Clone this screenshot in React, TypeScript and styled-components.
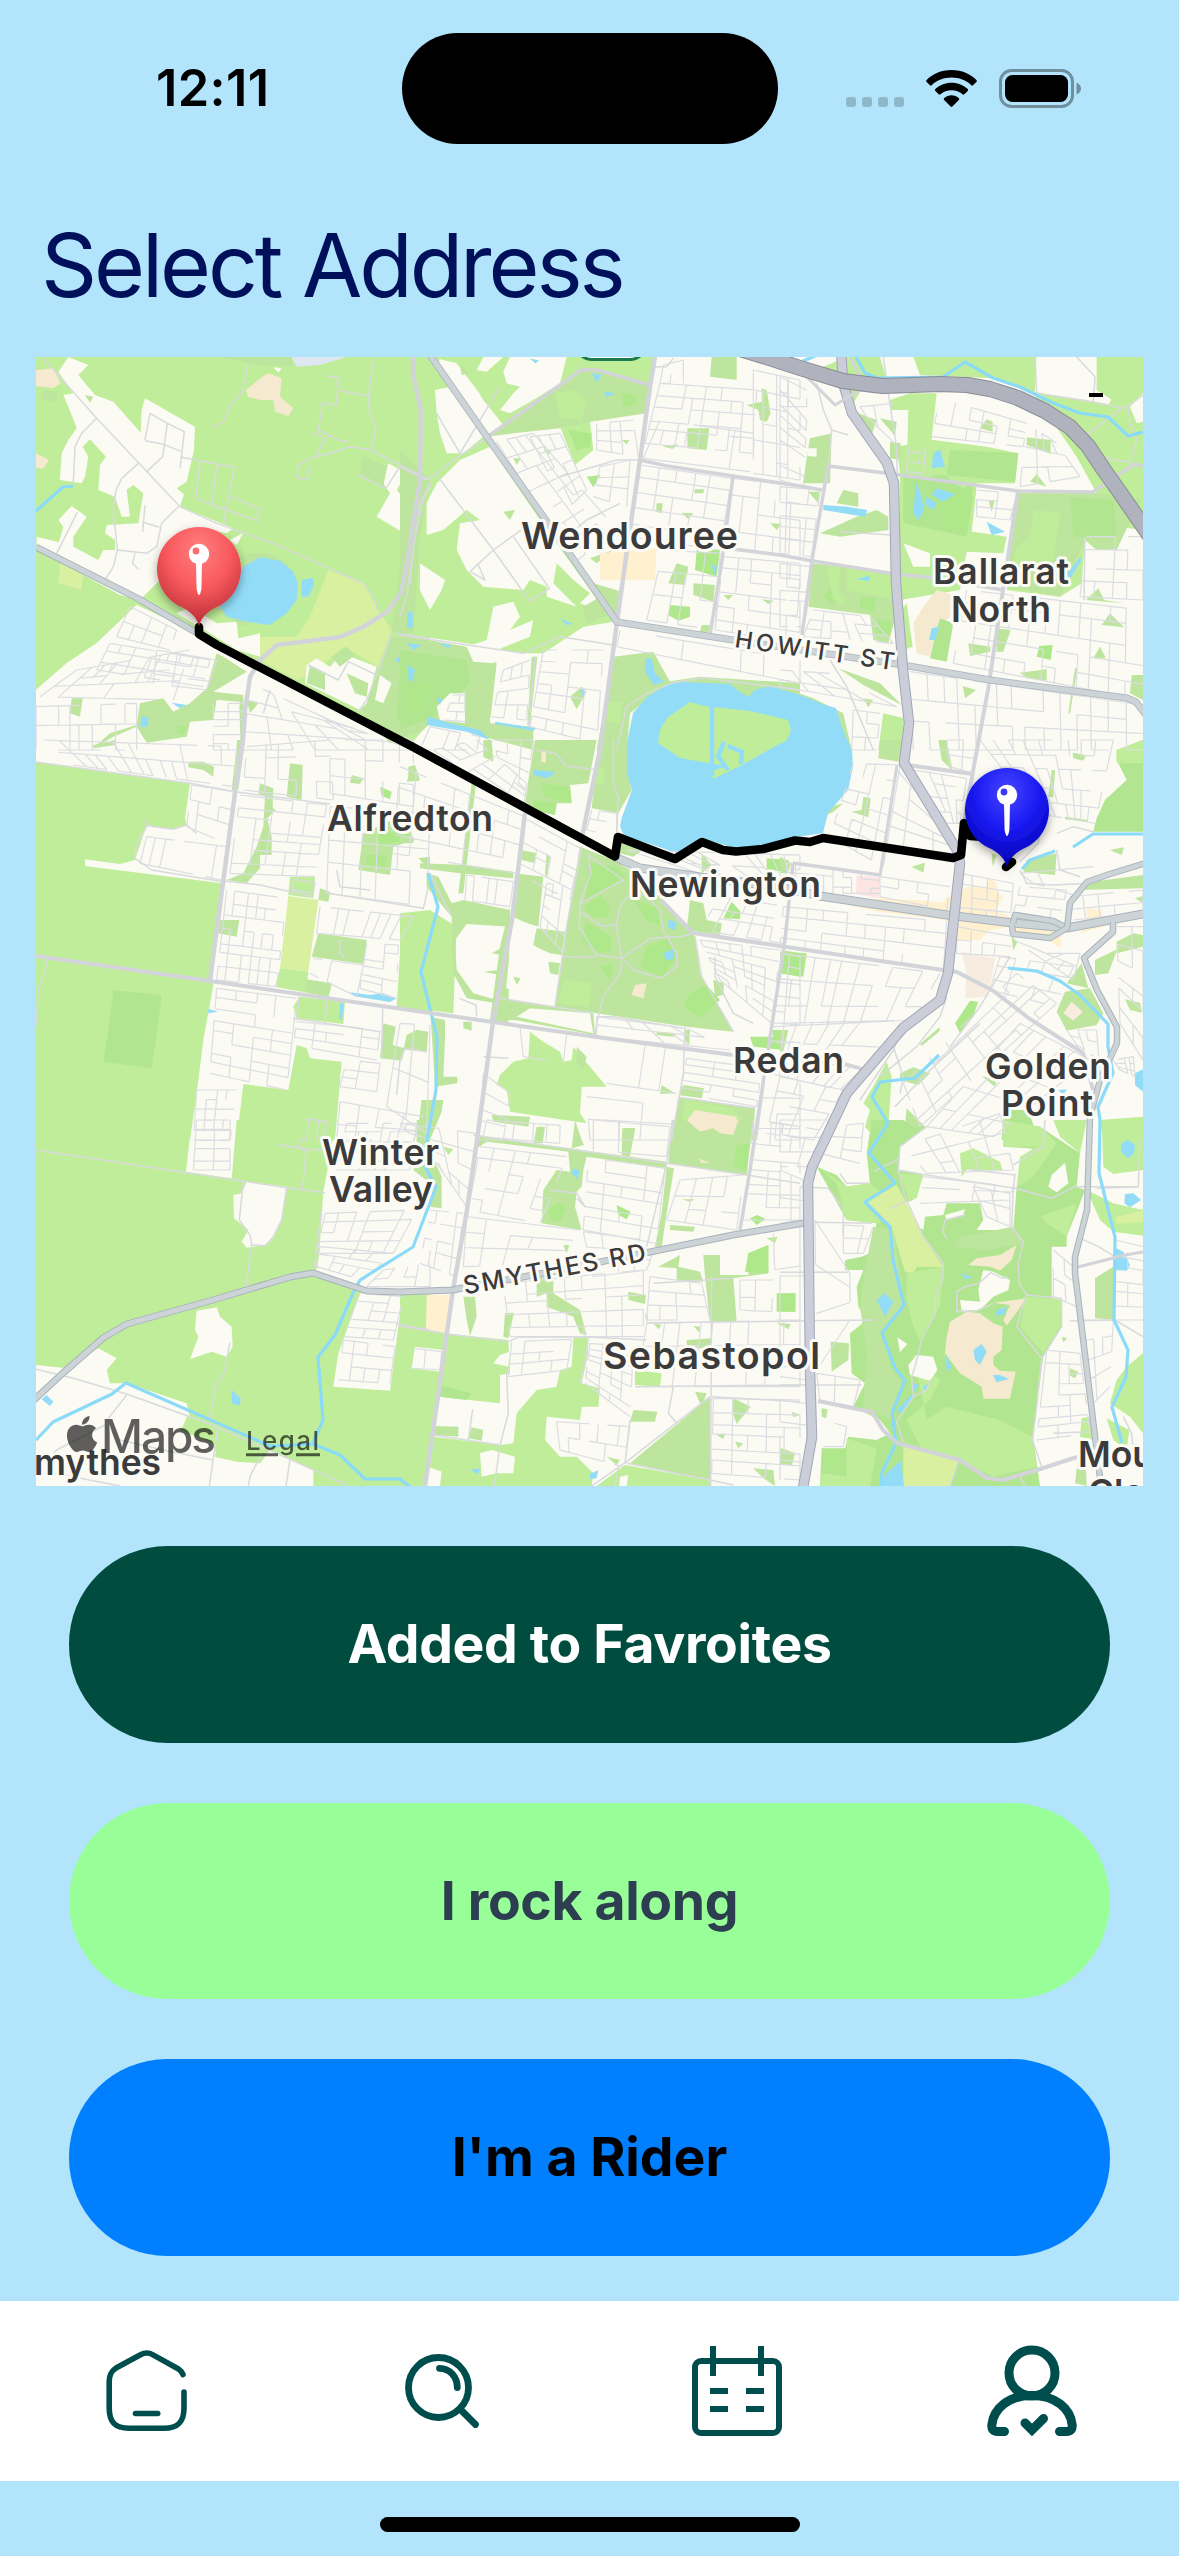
import React from "react";
import styled, { createGlobalStyle } from "styled-components";
import { FaApple } from "react-icons/fa";

const GlobalStyle = createGlobalStyle`
  * { box-sizing: border-box; }
  body { margin: 0; background: #b2e5fc; font-family: Inter, "Liberation Sans", sans-serif; }
`;

const Screen = styled.main`
  display: flex;
  flex-direction: column;
  width: 1179px;
  height: 2556px;
  overflow: hidden;
  background: #b2e5fc;
`;

const StatusBar = styled.header`
  display: grid;
  grid-template-columns: 1fr 376px 1fr;
  align-items: center;
  height: 177px;
  flex: none;
`;

const StatusSide = styled.div<{ $start: number; $gap?: number }>`
  display: flex;
  align-items: center;
  gap: ${(p) => p.$gap ?? 0}px;
  padding-left: ${(p) => p.$start}px;
`;

const Clock = styled.time`
  font-size: 50.5px;
  line-height: 60px;
  font-weight: 600;
  letter-spacing: 0.4px;
  padding-bottom: 2px;
  color: #000;
`;

const Island = styled.div`
  height: 111px;
  border-radius: 56px;
  background: #000;
`;

const Title = styled.h1`
  display: flex;
  align-items: center;
  flex: none;
  height: 180px;
  margin: 0;
  padding: 0 0 4px 41px;
  font-size: 87.5px;
  line-height: 106px;
  font-weight: 400;
  letter-spacing: -3.1px;
  color: #00105a;
`;

const MapFrame = styled.section`
  flex: none;
  width: 1107px;
  height: 1129px;
  margin: 0 36px;
  overflow: hidden;
  svg { display: block; }
`;

const Actions = styled.div`
  display: flex;
  flex-direction: column;
  flex: 1;
  gap: 60px;
  padding: 60px 69px 0;
`;

const PillButton = styled.button<{ $bg: string; $fg: string; $tracking?: number }>`
  height: 196.6px;
  flex: none;
  border: 0;
  border-radius: 98px;
  padding: 0;
  background: ${(p) => p.$bg};
  color: ${(p) => p.$fg};
  font-family: inherit;
  font-size: 53.5px;
  line-height: 66px;
  font-weight: 700;
  letter-spacing: ${(p) => p.$tracking ?? -0.35}px;
`;

const TabBar = styled.nav`
  display: grid;
  grid-template-columns: repeat(4, 1fr);
  align-items: center;
  justify-items: center;
  flex: none;
  height: 180px;
  background: #fff;
`;

const HomeArea = styled.footer`
  display: flex;
  justify-content: center;
  flex: none;
  height: 75px;
  padding-top: 36px;
`;

const HomeIndicator = styled.div`
  width: 420px;
  height: 15px;
  border-radius: 8px;
  background: #000;
`;

const TabGlyph = styled.svg`
  width: 90px;
  height: 90px;
  overflow: visible;
  fill: none;
  stroke: #004d4d;
`;

/* ---------- map data ---------- */

type Kind = "g" | "p" | "d" | "k" | "w" | "s" | "y" | "b" | "c" | "h" | "m" | "l";
const FILL: Record<Kind, string> = {
  g: "#c0ed99",
  p: "#bee59d",
  d: "#afe88a",
  k: "#b2e590",
  w: "#92dcf8",
  s: "#f5ead0",
  y: "#d9f0a1",
  b: "#fbfaf3",
  c: "#fff0cf",
  h: "#ffe4e4",
  m: "#f7ecdf",
  l: "#dfe8f2",
};

type Grid = [string, number, number];
interface Sheet {
  x: number;
  y: number;
  areas: [Kind, string][];
  grids: Grid[];
  lanes: string[];
}

/* Each sheet is surveyed at three units per pixel from its own origin. */
const SHEETS: Sheet[] = [
  {
    x: 30, y: 350,
    areas: [
      ["g", "18,21 1200,21 1200,1200 1000,1100 320,765 200,880 110,940 18,1020"],
      ["b", "115,21 175,45 145,75 195,135 250,155 332,248 335,180 345,145 495,230 492,300 470,395 440,415 462,432 450,470 610,535 590,550 540,540 460,640 380,700 330,750 270,735 150,670 20,595 20,560 100,580 130,590 205,630 220,600 255,600 255,570 225,550 230,525 325,520 340,430 310,405 290,420 300,500 275,500 255,440 205,420 210,345 228,320 180,268 158,290 175,320 165,380 155,400 90,390 95,310 115,270 140,235 125,195 100,135 130,130 85,65"],
      ["b", "320,765 500,850 700,950 1200,1200 18,1200 18,1020 110,940 200,880"],
      ["b", "440,790 480,770 560,820 620,815 625,865 690,850 690,920 620,900 540,850"],
      ["b", "1040,500 1080,430 1060,400 1075,340 1130,370 1100,420 1140,470 1115,545"],
      ["b", "85,510 125,468 170,500 130,560 130,600 80,600 100,530"],
      ["b", "600,570 640,548 620,585"], ["b", "730,52 755,55 745,68"],
      ["b", "1170,640 1200,650 1200,735 1180,720"],
      ["p", "1120,560 1200,500 1200,900 1085,840"],
      ["p", "1085,860 1200,880 1200,1150 1140,1150 1080,1180 990,1080"],
      ["k", "1110,960 1200,900 1200,1110 1150,1150 1100,1110"],
      ["y", "895,660 1000,700 1045,780 1085,840 1045,950 940,890 860,960 800,990 690,930 690,860 800,860 840,800"],
      ["y", "90,640 160,660 155,720 85,700"],
      ["b", "830,945 860,925 900,950 935,910 1040,950 1010,1060 990,1080 825,1000"],
      ["p", "840,945 885,970 885,1020 830,1000"], ["p", "905,920 950,890 975,915 930,950"], ["p", "950,970 1015,1000 1010,1040 975,1030"],
      ["b", "1050,975 1085,1000 1060,1060 1035,1050"],
      ["p", "1000,320 1070,350 1060,410 990,370"],
      ["p", "580,640 660,610 720,610 770,640 800,700 640,830 560,780"],
      ["w", "640,650 690,622 750,632 790,665 803,700 800,750 770,790 720,825 650,815 590,800 570,770 600,700"],
      ["w", "815,690 850,683 852,705 835,740 815,740"],
      ["s", "648,120 690,85 715,70 755,85 750,140 790,175 775,198 735,185 730,150 690,150 655,140"],
      ["s", "18,60 70,55 92,100 70,115 18,108"], ["s", "18,310 57,330 40,355 18,355"],
      ["p", "35,120 80,125 80,155 35,150"], ["p", "165,135 190,140 180,158"], ["l", "785,21 950,21 870,45 800,50"],
      ["p", "570,21 785,21 790,48 700,48"],
      ["w", "1140,780 1150,800 1148,835 1130,835"], ["w", "1130,880 1175,885 1150,905"],
      ["w", "1140,945 1155,960 1145,1000 1135,990"], ["w", "1095,930 1125,905 1110,940"],
      ["p", "330,1060 400,1045 430,1085 480,1060 530,1015 545,960 560,910 580,920 650,965 550,1025 640,1035 640,1200 632,1200 628,1060 560,1050 550,1110 480,1115 470,1160 350,1178 320,1130 250,1160 190,1195 240,1150 320,1125"],
      ["b", "560,1050 630,1055 620,1110 560,1110"],
      ["p", "125,1045 158,1045 150,1100 120,1090"], ["p", "650,1050 685,1060 660,1090"],
      ["w", "335,1100 355,1100 355,1130 330,1130"], ["w", "425,1058 470,1065 450,1075"],
      ["d", "440,1125 470,1130 460,1155 440,1150"],
    ],
    grids: [
      ["140,960 480,900 430,1050 30,1040", 8, 3], ["240,880 540,930 520,1010 200,960", 7, 3],
      ["18,1070 320,1060 320,1200 18,1200", 9, 2], ["380,900 560,930 530,1020 370,1000", 3, 3],
      ["660,1000 900,1110 1150,1200 640,1200", 7, 4], ["300,770 440,840 420,900 260,860", 4, 2],
      ["550,1060 640,1060 640,1200 550,1200", 2, 6],
    ],
    lanes: [
      "40,25 200,205 450,470 560,520 730,580 1000,700 1030,740 1045,785", "200,205 155,250 135,290 130,400",
      "325,340 275,385 258,420 250,480 262,600 250,650 225,690", "445,470 395,520 380,590 350,610 262,600",
      "345,270 360,190 412,220 463,245 450,355", "345,272 400,283 455,305", "412,220 398,320 350,365",
      "455,322 612,352 580,525", "510,330 497,445 590,480 680,512 692,478 605,440", "563,340 545,462",
      "655,40 638,125 598,172 580,215 550,232", "890,78 928,82 918,165 878,160 865,240 930,272 958,275",
      "928,122 1015,137 1032,21", "1015,137 1018,185 1038,230 1025,300", "848,247 888,265 855,320 805,345 800,382 830,390 840,345",
      "855,320 900,310 960,290 1020,300 1200,390", "985,375 1068,415 1108,352", "142,487 80,610", "345,465 338,545",
      "340,517 388,532", "1085,850 1050,950 1010,1050 985,1085", "1095,850 1200,865", "1140,700 1150,600 1170,460 1200,400",
      "315,610 307,640 325,658", "835,945 925,990 955,935 1040,975", "720,1020 700,1090",
    ],
  },
  {
    x: 400, y: 350,
    areas: [
      ["g", "0,21 765,21 745,185 570,215 580,300 525,345 480,230 320,240 260,260 640,815 550,830 430,910 370,910 200,880 0,850"],
      ["p", "260,260 400,160 545,50 755,100 740,190 570,215 480,235 340,250"],
      ["g", "465,130 520,120 560,150 545,210 480,200"],
      ["d", "665,130 710,135 710,165 670,170"],
      ["b", "120,28 170,40 235,125 250,150 310,225 265,255 180,130 110,50"],
      ["b", "310,65 330,21 500,21 480,100 400,150 330,190 300,180 340,130 360,110 320,100"],
      ["b", "230,60 250,21 310,21 260,65"],
      ["b", "105,120 150,110 250,260 190,310 140,310 120,250 110,190"],
      ["b", "180,330 270,290 420,510 620,790 540,760 570,730 520,690 470,640 460,700 530,770 440,740 440,710 390,690 370,720 250,710 200,660 170,600 180,520 240,510 200,480 130,540 80,555 80,460 110,400"],
      ["b", "280,770 340,755 360,800 330,840 400,810 390,860 290,900 200,890 260,870"],
      ["b", "60,640 135,690 125,720 90,780 60,720"],
      ["p", "0,300 90,390 60,560 40,850 0,850"],
      ["p", "0,855 200,890 290,940 270,1120 400,1130 400,1200 250,1160 100,1110 20,1160 0,1160"],
      ["k", "0,900 200,930 210,1000 100,1100 0,1140"], ["d", "30,1010 90,1000 80,1070 30,1100"],
      ["b", "200,890 295,900 280,940 220,935"], ["b", "150,1030 195,1030 195,1120 120,1110 110,1070"],
      ["b", "90,1120 240,1150 245,1200 20,1200 60,1150"],
      ["b", "300,960 370,910 410,915 390,1115 270,1110 290,1000"],
      ["p", "395,920 412,920 390,1125 382,1125"],
      ["p", "640,920 760,905 810,995 690,1090 680,1200 590,1200"], ["g", "620,1060 665,1055 660,1120 615,1110"],
      ["p", "800,995 900,980 1200,1000 1200,1060 1000,1050 800,1010"],
      ["p", "550,770 600,740 580,700 665,725 655,800 640,790 560,820"],
      ["p", "862,235 928,235 920,300 862,295"], ["d", "810,765 870,770 870,800 835,812 805,795"],
      ["d", "560,380 602,375 590,395 580,412"], ["d", "505,240 575,250 570,290 530,300"],
      ["p", "1085,115 1100,120 1112,190 1100,215 1080,210 1075,180 1040,165 1085,155"],
      ["p", "935,21 1010,21 1010,90 930,80"], ["d", "890,600 960,600 950,680 885,660"],
      ["p", "880,700 945,705 940,755 880,735"], ["p", "830,640 865,650 855,705 805,700"], ["p", "785,288 835,283 818,297"],
      ["p", "770,460 788,460 785,490 768,485"], ["p", "845,488 880,490 865,508"], ["p", "885,418 912,418 910,430 882,430"],
      ["p", "970,735 1000,735 985,750"], ["p", "1085,748 1122,752 1105,762"], ["p", "1110,520 1145,522 1130,540"],
      ["p", "905,825 930,825 925,848 900,845"], ["p", "340,325 362,325 350,345"], ["p", "430,298 455,300 445,315"],
      ["p", "665,270 688,270 680,283"], ["p", "570,625 640,600 590,640"], ["p", "310,485 345,480 330,510"],
      ["p", "180,45 210,70 185,75"], ["p", "510,1040 545,1010 560,1025 530,1078"],
      ["c", "600,610 770,595 765,690 600,690"],
      ["w", "575,70 605,75 590,97"], ["w", "612,125 645,130 620,142"], ["w", "480,805 520,822 500,825"],
      ["w", "735,925 755,925 765,970 792,995 762,1005 735,965"], ["w", "935,645 950,648 947,682"],
      ["w", "25,785 38,785 38,835 20,830"], ["w", "20,880 65,885 40,900"], ["w", "115,880 155,885 145,895"],
      ["w", "25,945 45,960 35,1000 25,985"], ["w", "110,1045 128,1045 120,1065"], ["w", "540,1018 556,1022 550,1045"],
      ["w", "85,1100 150,1120 240,1140 270,1170 200,1145 80,1125"], ["w", "285,1115 410,1135 400,1142 285,1122"],
      ["w", "390,25 418,32 405,40"],
    ],
    grids: [
      ["780,100 1070,120 1060,310 735,280", 8, 5], ["1060,60 1200,90 1200,390 1060,370", 4, 6],
      ["780,210 1060,250 1050,365 730,325", 5, 1], ["720,345 995,385 960,600 690,560", 5, 5],
      ["790,600 960,610 945,840 740,810", 4, 3], ["1000,385 1200,410 1200,620 970,590", 5, 4],
      ["970,620 1200,640 1200,880 945,840", 5, 6], ["290,275 400,250 650,540 520,640", 4, 7],
      ["390,260 480,250 560,420 500,480", 3, 4], ["600,350 690,330 680,470 580,440", 2, 3],
      ["590,220 700,210 715,320 590,300", 3, 3], ["660,840 1200,930 1200,1000 650,890", 6, 1],
      ["430,900 610,900 590,1180 390,1130", 4, 7], ["310,960 390,930 380,1110 275,1100", 3, 4],
      ["160,1035 195,1035 195,1115 130,1110", 2, 3], ["790,45 850,30 850,100 780,100", 2, 2],
      ["90,1130 240,1160 230,1200 60,1200", 5, 1],
    ],
    lanes: [
      "110,190 180,310 300,110", "110,375 280,600 390,755 448,715 340,560", "280,600 210,665 255,690 235,645",
      "280,600 370,535", "0,350 80,390 190,310 260,265", "95,395 70,450 45,560 20,740 0,800",
      "0,855 370,910 480,860 640,885", "480,380 650,330 720,330", "500,560 560,510 660,460", "765,50 800,50 820,25",
      "650,1200 680,1070 740,1030 820,998 910,983 1200,1020", "405,920 385,1130",
    ],
  },
  {
    x: 780, y: 350,
    areas: [
      ["g", "400,21 770,21 765,125 985,165 1065,21 1089,21 1089,540 1015,530 1010,600 950,600 950,570 915,570 905,700 840,740 680,720 715,430 950,430 890,320 760,130 640,85 420,75"],
      ["g", "200,21 300,21 320,90 250,80"], ["b", "330,21 400,21 400,80 375,80"],
      ["b", "770,21 890,21 945,80 950,150 985,165 765,125"], ["g", "950,21 1065,21 1065,130 1035,175 950,120"],
      ["b", "1089,130 1050,170 1070,220 1089,215"],
      ["p", "700,430 950,430 1080,450 1010,600 950,600 915,570 840,740 680,710"],
      ["g", "760,480 840,490 820,630 690,680 710,590 750,560"], ["k", "870,440 1000,450 1010,560 880,560"],
      ["g", "350,290 460,270 620,290 715,310 705,400 590,400 580,545 680,560 670,610 560,605 540,720 360,750 360,370"],
      ["k", "510,300 715,310 705,395 500,375 370,370 370,520 560,560 580,440 500,380"], ["d", "480,450 580,400 560,540 490,540"],
      ["b", "590,415 715,425 680,550 575,545"], ["p", "625,450 645,450 635,485"],
      ["b", "370,580 450,610 450,650 400,650"],
      ["g", "390,130 470,130 455,265 460,380 380,380 385,180 335,180 330,150"], ["p", "330,275 362,280 360,330 330,325"],
      ["p", "95,640 345,670 350,790 325,880 280,870 270,795 85,770"], ["g", "200,655 345,670 350,750 200,720"],
      ["d", "130,740 150,715 175,740 160,765"], ["d", "240,740 290,745 280,785 240,775"], ["d", "290,810 335,815 330,860 290,850"],
      ["g", "140,650 180,650 175,730 200,740 190,770 160,750"],
      ["s", "470,720 540,740 520,790 470,840 450,920 410,910 400,820 430,770"],
      ["k", "480,805 520,820 500,935 450,925 470,840"],
      ["p", "90,265 155,250 150,400 70,400 80,320"], ["b", "82,295 110,295 110,320 82,318"], ["p", "120,550 230,500 290,480 325,500 325,540 180,560"],
      ["p", "190,420 235,430 235,470 170,460"], ["p", "85,425 120,425 115,460"],
      ["g", "110,80 175,95 210,175 250,110 290,110 245,70 200,21 130,50"], ["p", "235,190 290,210 275,255 225,210"],
      ["p", "300,205 350,215 345,260 330,240"],
      ["p", "740,262 812,270 812,312 740,285"], ["p", "620,208 638,215 638,245 600,235"], ["p", "770,372 800,410 750,395"],
      ["p", "565,880 632,890 630,905 570,918"], ["d", "778,888 818,885 812,930 770,920"], ["p", "720,968 800,958 800,992 740,985"],
      ["p", "548,1008 588,1020 555,1045"], ["p", "960,890 978,925 940,925"], ["p", "990,790 1032,832 965,825"],
      ["p", "955,715 972,750 1030,760 918,750"], ["p", "1055,975 1089,975 1089,1050 1050,1030"],
      ["p", "650,835 692,840 670,905 650,905"], ["g", "310,1090 372,1105 365,1200 295,1200"],
      ["p", "175,955 300,1000 365,1065 250,1005"], ["g", "355,790 380,760 398,890 370,900"],
      ["p", "250,1045 280,1050 265,1072"], ["p", "885,955 892,955 870,1090 865,1090"], ["p", "0,1010 100,1045 190,1090 215,1200 190,1200 150,1090 0,1030"],
      ["w", "460,310 480,297 495,350 455,355"], ["w", "408,395 425,440 432,480 415,510 400,490"],
      ["w", "470,415 525,432 490,455 455,435"], ["w", "440,440 470,460 460,480 435,465"],
      ["w", "130,465 200,470 262,480 255,500 130,480"], ["w", "620,515 675,545 635,555"],
      ["w", "860,672 900,622 905,630 870,687"], ["w", "228,688 268,677 270,693"], ["w", "455,835 478,830 465,870 447,870"],
    ],
    grids: [
      ["0,120 80,210 70,410 0,390", 1, 7], ["0,410 120,420 95,620 0,610", 3, 5], ["0,640 95,650 75,830 0,830", 3, 5],
      ["480,145 740,220 730,290 455,260", 6, 3], ["740,220 830,280 900,380 720,410", 4, 3],
      ["560,720 1089,780 1089,1050 520,940", 11, 5], ["390,965 1089,1065 1089,1200 400,1200", 14, 3],
      ["100,780 270,800 340,880 70,860", 6, 3], ["920,560 1089,560 1089,750 900,740", 4, 4],
      ["0,960 150,970 350,1070 0,1010", 4, 2], ["590,420 710,430 690,510 590,500", 2, 3],
      ["240,170 340,160 345,280 260,200", 2, 1], ["0,80 80,120 80,170 0,170", 3, 2], ["220,1080 300,1090 290,1200 215,1200", 2, 3],
    ],
    lanes: [
      "890,21 945,80 940,155 1030,175 1050,165 1089,135", "765,21 770,130 940,155", "1045,175 1050,220 1070,270 1050,340",
      "1025,175 915,260", "980,315 985,328 1050,335", "145,350 155,240 205,255", "110,100 130,180 155,240",
      "310,21 325,130 348,280 352,370", "150,930 200,1010 280,1200", "180,545 335,555", "915,560 912,750",
      "385,290 380,365 430,370 437,290", "390,335 430,340", "390,305 435,310",
    ],
  },
  {
    x: 30, y: 740,
    areas: [
      ["g", "18,66 480,130 465,235 470,255 430,268 350,255 315,360 270,372 165,358 165,378 575,430 540,715 550,735 520,900 500,1060 480,1200 18,1200"],
      ["k", "250,750 395,765 382,870 365,985 220,965 235,870"],
      ["p", "475,65 520,65 552,80 550,110 520,90 475,82"], ["p", "190,15 255,0 255,15 190,25"],
      ["p", "780,70 818,75 815,180 770,170"],
      ["p", "690,130 730,145 728,205 738,210 712,235 725,290 725,345 690,345 690,385 650,430 590,420 640,400 680,320 700,260 705,170 685,160"],
      ["p", "1000,280 1085,240 1155,300 1090,320 1080,405 985,390"], ["d", "1010,345 1070,345 1065,385 1010,385"], ["d", "1040,280 1140,270 1150,300 1050,315"],
      ["g", "780,410 855,412 850,475 775,465"], ["y", "775,468 865,480 835,695 750,685"],
      ["g", "750,685 835,695 830,745 905,735 895,770 735,740"], ["p", "830,718 905,730 895,770 825,755"],
      ["p", "865,580 1010,600 1000,672 845,650"], ["p", "570,540 628,540 620,590 565,580"],
      ["p", "870,445 900,455 895,485 865,480"], ["g", "1150,525 1200,520 1200,820 1100,800 1110,640 1140,580"],
      ["g", "808,770 945,785 940,852 800,835 790,800"], ["p", "1060,850 1097,860 1088,915 1125,925 1115,962 1050,955"],
      ["p", "1130,895 1160,870 1190,875 1190,935 1125,925"],
      ["g", "800,915 830,925 840,955 935,965 915,1200 620,1200 640,1032 775,1050"],
      ["p", "1175,1080 1200,1080 1200,1200 1165,1200"], ["p", "1145,80 1168,122 1130,125"],
      ["d", "1050,140 1085,155 1080,178 1055,168"], ["p", "965,105 1000,115 990,132 960,128"], ["p", "1165,355 1200,350 1200,390"],
      ["p", "622,0 645,0 625,150 605,150"],
      ["w", "960,757 1020,765 1060,760 1100,775 1080,786 970,768"], ["w", "930,790 942,790 935,840 927,835"],
      ["w", "535,806 565,815 535,820"],
    ],
    grids: [
      ["40,0 620,20 615,140 130,75", 14, 2], ["485,135 610,155 590,310 470,260", 4, 3],
      ["350,290 590,320 575,420 330,370", 9, 1], ["630,165 890,195 855,410 600,400", 5, 7],
      ["590,450 770,475 740,740 560,720", 6, 7], ["900,200 1200,220 1190,500 890,460", 6, 3],
      ["870,500 1150,530 1110,600 860,580", 9, 1], ["1010,610 1105,615 1100,775 990,745", 2, 6],
      ["850,655 1000,675 980,770 840,700", 5, 1], ["560,745 800,775 770,1050 540,1000", 4, 8],
      ["800,845 1050,870 1040,960 790,915", 5, 3], ["950,960 1050,970 1040,1055 930,1040", 2, 3],
      ["930,1085 1180,1130 1150,1200 920,1200", 4, 2], ["500,1050 620,1050 600,1200 490,1200", 4, 5],
      ["650,20 900,0 910,180 640,150", 5, 3], ["900,0 1150,0 1150,200 900,160", 5, 3],
    ],
    lanes: [
      "18,66 480,130 615,155 900,192", "350,240 350,260 320,310 315,355 365,390 580,425", "350,257 430,268 470,255 500,280",
      "575,422 690,435 850,470", "50,660 45,700 25,750 18,860", "930,600 930,640 945,650", "793,415 787,450 850,458 855,428 793,418",
      "808,770 800,840", "890,785 885,850", "790,835 1050,875", "1058,805 1055,955", "1110,960 1125,925 1190,935",
      "1110,960 1100,1065", "920,390 930,440 1020,450", "825,1135 890,1145 880,1200", "865,1140 860,1200", "895,460 1180,505 1195,440",
    ],
  },
  {
    x: 400, y: 740,
    areas: [
      ["p", "405,0 590,0 565,130 510,135 515,190 470,190 460,225 375,195 385,120"], ["d", "425,130 510,140 515,190 430,170"], ["d", "400,180 470,190 465,225 400,210"],
      ["p", "595,0 680,0 690,130 695,150 655,220 575,205"], ["g", "590,80 615,85 610,135 580,130"],
      ["p", "540,320 640,360 700,395 760,450 885,590 900,700 1000,875 860,860 590,820 465,800 500,560"],
      ["d", "570,370 650,380 680,415 555,480"], ["d", "550,500 600,465 630,500 625,530 580,535"], ["d", "560,545 630,590 635,630 600,640 545,600"],
      ["d", "740,620 800,595 832,650 785,712 720,680"], ["d", "850,800 870,760 920,735 960,780 900,835"], ["d", "700,480 770,500 780,555 740,540"], ["d", "600,680 640,670 630,720"],
      ["g", "495,720 575,730 565,800 470,790"],
      ["g", "0,520 90,510 170,560 165,680 160,820 0,800"],
      ["p", "80,400 115,410 155,490 190,480 330,510 330,560 200,552 165,600 170,690 220,760 290,780 290,790 200,775 160,700 155,530 80,440"],
      ["p", "345,400 430,410 415,560 370,545 340,530"], ["p", "60,370 200,375 340,395 340,415 180,400 60,385"], ["p", "228,130 190,460 175,460 215,130"],
      ["p", "410,565 495,575 485,645 450,640 395,615"], ["p", "440,340 450,350 440,410 435,400"], ["p", "365,330 410,340 405,370 365,360"],
      ["p", "300,775 400,790 580,820 585,885 345,840 280,840"], ["b", "390,805 570,820 580,880 350,830"],
      ["p", "330,500 325,850 270,840 300,620"], ["b", "338,552 410,560 400,615 450,645 465,800 390,780 360,755 318,745"], ["p", "445,665 480,670 475,705 450,700"], ["p", "275,640 310,620 305,645"], ["p", "250,695 300,690 300,705"],
      ["g", "390,875 430,905 480,935 490,965 515,960 520,920 620,1040 545,1040 540,1120 560,1150 330,1115 320,1050 290,1035 300,1005 340,965 385,955"],
      ["p", "92,830 135,840 135,900 130,1010 172,1010 172,1030 105,1040"], ["p", "20,885 50,870 85,875 80,932 10,930"],
      ["p", "870,480 910,490 920,540 965,550 960,585 860,570"], ["d", "995,485 1022,515 1020,538 970,535"], ["p", "905,340 935,375 905,400"],
      ["d", "1100,355 1165,360 1165,395 1100,390"], ["p", "1120,285 1170,285 1170,300 1120,300"], ["p", "900,290 970,290 965,320 930,310"],
      ["p", "1148,630 1200,640 1200,710 1140,700"], ["d", "1050,890 1120,890 1115,870 1160,870 1150,930 1060,920"],
      ["p", "835,1070 1065,1105 1060,1200 815,1200"], ["g", "855,1080 1000,1105 1050,1170 840,1180"], ["s", "885,1110 1010,1130 1012,1170 960,1185 880,1175 862,1140"],
      ["p", "850,1035 912,1045 905,1075 835,1065"], ["p", "785,1035 825,1060 780,1062"], ["p", "855,870 870,870 868,915 853,900"],
      ["p", "65,1080 130,1080 125,1115 90,1200 50,1200"], ["s", "705,735 740,730 730,775 695,765"], ["s", "425,35 438,35 438,68 423,65"],
      ["p", "275,1125 390,1130 385,1160 280,1145"], ["p", "668,1165 705,1165 700,1200 665,1200"], ["p", "190,845 215,845 215,872 190,865"],
      ["p", "25,80 45,75 60,120 25,122"], ["p", "0,285 40,290 40,310 0,310"], ["p", "250,0 275,0 280,65 250,50"],
      ["p", "660,300 740,320 700,350 660,340"], ["p", "940,720 972,730 970,765 945,770"], ["p", "340,710 362,715 350,735"],
      ["p", "770,875 830,880 820,890 770,885"], ["p", "530,920 560,950 550,990 530,970"],
      ["w", "400,90 465,95 455,107 440,115 400,105"], ["w", "805,540 830,545 828,570 805,565"], ["w", "790,640 820,628 822,655 800,662"],
    ],
    grids: [
      ["0,80 375,230 350,400 -20,340", 9, 4], ["100,30 230,0 380,130 370,210", 4, 5], ["200,405 340,425 330,500 195,480", 6, 1],
      ["375,235 540,325 510,480 350,400", 4, 5], ["440,430 515,440 490,640 420,560", 3, 4],
      ["680,330 1200,345 1200,430 900,400", 12, 2], ["960,470 1165,500 1150,610 900,570", 7, 3],
      ["900,600 1140,630 1115,850 960,720", 6, 7], ["590,830 860,865 990,930 590,890", 6, 2],
      ["640,900 850,930 830,1060 620,1030", 4, 1], ["860,955 1085,985 1070,1100 840,1060", 3, 5],
      ["1145,640 1200,650 1200,1200 1070,1200", 2, 13], ["0,850 90,855 80,1180 -40,1100", 2, 2],
      ["560,1070 830,1100 810,1200 570,1200", 3, 2], ["250,1000 330,1060 310,1200 240,1200", 2, 4], ["575,210 650,220 650,290 560,270", 3, 2],
      ["280,0 400,0 380,150 300,80", 3, 3], ["360,860 500,880 490,970 370,950", 2, 1],
    ],
    lanes: [
      "565,340 573,400 540,490 538,560 590,645 665,655 750,595 840,590 885,580", "540,515 605,558 648,555", "665,655 655,600 648,555 660,500 690,460",
      "540,490 670,420 565,345", "665,655 700,690 785,715 830,680 830,640 790,570 780,510 740,470 690,450", "665,655 660,700 610,770 590,850 585,885",
      "487,650 580,652 590,645", "885,590 905,710 1000,875", "545,320 500,560 465,800", "300,775 580,820", "640,0 640,130 655,170 650,290",
      "410,30 465,40 500,78 590,90", "90,400 155,530", "590,830 640,830 850,865", "855,860 850,1000 815,1200", "835,1072 1065,1105",
      "178,775 228,795 230,830", "250,950 325,955", "945,650 945,710 1000,820 1060,850",
    ],
  },
  {
    x: 780, y: 740,
    areas: [
      ["p", "300,0 372,0 355,65 295,55"], ["p", "475,0 500,0 518,92 485,60"],
      ["k", "1010,30 1089,0 1089,275 940,275 950,235 975,180 1040,120 1010,60"], ["g", "1010,30 1089,0 1089,70 1010,70"],
      ["p", "215,215 245,210 250,170 272,175 265,232"], ["p", "110,205 150,200 190,190 160,215 140,225"], ["p", "395,380 435,368 430,398"],
      ["p", "878,38 918,45 910,62 880,55"], ["p", "815,90 825,90 820,172 805,170"], ["p", "855,230 925,240 920,245 855,238"],
      ["c", "490,480 545,450 580,435 615,445 630,415 648,430 650,462 670,465 650,510 690,530 700,560 630,570 600,600 545,600 520,615 525,560 490,540"],
      ["c", "200,495 300,475 435,482 500,490 500,540 300,515"], ["c", "700,540 830,555 840,580 800,590 700,575"],
      ["c", "920,505 965,510 970,560 900,580 920,545"], ["c", "805,600 845,585 840,625"],
      ["h", "230,405 300,412 295,475 228,462"], ["m", "545,635 645,655 625,770 555,775 560,700"],
      ["p", "740,360 830,340 825,405 730,395"], ["p", "935,425 1089,405 1089,445 900,450"], ["p", "990,330 1032,322 1025,345"], ["p", "1065,475 1089,468 1089,490"],
      ["p", "1010,605 1060,580 1089,585 1089,620 1010,640"], ["p", "945,660 1012,628 985,700 945,705"], ["p", "860,730 905,670 925,745"],
      ["p", "830,815 855,755 930,745 970,820 950,855 860,872"], ["m", "875,785 908,815 880,842 850,820"],
      ["d", "570,782 594,785 580,830 540,880 525,850"], ["d", "0,635 80,640 70,710 0,700"], ["p", "0,870 25,870 10,935 0,935"], ["p", "0,350 35,370 20,400 0,400"],
      ["g", "250,1090 285,1030 320,965 335,1010 330,1090 325,1160 290,1200 255,1160 270,1110"], ["p", "380,1105 435,1160 370,1200"],
      ["p", "360,1000 400,982 450,1000 415,1035 360,1020"], ["k", "690,1110 745,1110 775,1200 665,1200 670,1130"], ["g", "960,1140 1089,1130 1089,1200 970,1200"],
      ["p", "605,1008 650,1020 645,1040"], ["p", "1035,778 1080,788 1085,818 1050,810"], ["p", "695,590 712,605 700,632"], ["p", "420,912 478,862 480,872 425,918"], ["p", "635,340 650,345 638,380"],
      ["w", "1065,1000 1089,988 1089,1055 1065,1035"], ["w", "835,1050 860,1048 850,1065"],
    ],
    grids: [
      ["400,90 560,115 540,250 500,250", 4, 4], ["600,0 1000,0 945,250 770,220", 9, 5], ["500,0 600,0 580,100 510,80", 2, 2],
      ["220,70 360,75 310,380 150,290", 4, 6], ["350,90 500,260 520,340 310,320", 3, 4], ["20,370 300,405 300,460 20,460", 10, 3],
      ["300,410 510,440 500,510 300,470", 4, 2], ["10,500 500,545 490,690 0,620", 8, 4], ["0,640 480,700 400,840 -20,860", 10, 3],
      ["0,850 400,840 180,1050 -30,1000", 8, 3], ["0,1010 190,1050 100,1200 -40,1180", 4, 4],
      ["710,700 830,790 420,1160 370,1030", 5, 8], ["720,850 930,960 640,1190 440,1160", 5, 5],
      ["660,650 880,680 830,800 630,750", 5, 3], ["720,440 860,450 840,540 700,520", 4, 3], ["540,400 700,430 690,550 540,540", 4, 4],
      ["530,560 700,590 690,650 530,640", 4, 2], ["1010,560 1089,560 1089,960 1020,850", 2, 6], ["870,470 1089,450 1089,520 880,540", 5, 2],
      ["800,640 900,640 880,720 700,600", 4, 2], ["860,870 950,870 960,1000 900,930", 3, 3], ["1000,960 1060,950 1065,1010 1020,990", 4, 3], ["720,400 940,380 900,470 760,430", 4, 1],
    ],
    lanes: [
      "720,390 740,430 820,435 930,430", "780,270 775,310 720,365", "830,330 840,390 900,410", "940,275 880,260 830,280",
      "500,770 480,830 410,920 300,1010", "690,650 600,800 510,920", "240,1080 340,930 370,860", "345,1100 440,1000 600,850", "340,920 370,1010 360,1060",
    ],
  },
  {
    x: 30, y: 1120,
    areas: [
      ["g", "18,0 485,0 468,155 18,95"], ["g", "620,0 920,0 880,215 605,178"],
      ["g", "18,90 468,155 880,215 865,440 850,460 290,612 18,835"],
      ["g", "290,612 850,460 1010,515 1200,520 1200,1100 850,1100 18,1100 18,735"],
      ["b", "610,225 635,220 650,185 770,200 755,300 730,355 710,375 650,383 635,365 655,330 612,295"],
      ["b", "500,572 560,562 570,590 605,620 608,680 590,710 545,695 480,718 505,650 495,630"],
      ["b", "990,520 1120,525 1105,620 1080,812 910,800 925,700 945,645"],
      ["b", "18,735 110,745 205,685 260,715 230,750 240,790 290,790 470,850 480,895 450,930 560,975 555,1010 620,1025 690,1030 720,990 850,1050 850,1100 18,1100"],
      ["g", "470,890 560,920 700,975 690,1025 560,1012 550,960 455,930"],
      ["b", "1150,680 1200,685 1200,750 1145,745"], ["b", "862,440 880,320 1000,400 990,490"],
      ["p", "1170,0 1200,0 1200,190 1150,150 1180,60"],
      ["w", "605,810 632,835 630,857 605,850"], ["w", "35,838 50,825 70,845 60,858"],
    ],
    grids: [
      ["950,10 1160,10 1140,150 920,150", 6, 5], ["885,280 1160,270 1090,400 860,400", 6, 4], ["870,380 1090,400 1000,480 860,440", 4, 3],
      ["990,520 1120,530 1090,660 940,650", 3, 5], ["940,660 1095,680 1080,790 925,780", 4, 3], ["1060,450 1200,430 1200,500 1010,500", 4, 2],
      ["500,0 600,0 600,150 490,150", 2, 5],
    ],
    lanes: [
      "18,90 470,158 770,203 885,218", "640,185 628,300 660,345 665,375 648,500", "770,203 755,300 730,350 705,377 665,375",
      "850,460 875,270", "18,748 130,775 290,822 540,912 780,1018 950,1095", "290,825 235,895", "600,668 580,765 555,800 538,910",
      "563,925 538,1098", "780,1018 768,1098", "695,1000 660,1070 655,1098", "1100,612 1200,630", "745,75 835,88 875,90", "828,90 818,205",
      "835,0 830,60 810,60 805,80 828,95", "270,960 400,990 548,1020", "225,915 80,990 50,1020", "75,1060 270,1098",
    ],
  },
  {
    x: 400, y: 1120,
    areas: [
      ["g", "0,525 80,530 75,630 130,640 325,660 330,760 300,765 300,850 120,830 100,950 300,975 340,970 350,880 410,810 470,800 480,750 515,740 520,655 560,650 565,700 545,790 600,805 595,860 545,860 540,900 440,890 435,960 480,1010 530,1010 580,1060 575,1098 0,1098"],
      ["b", "45,680 130,690 120,755 35,745"], ["b", "240,1000 275,990 345,1010 340,1060 290,1060 245,1070"], ["b", "280,730 300,705 328,695 325,740"],
      ["b", "85,1040 125,1055 120,1098 80,1098"], ["k", "120,795 215,820 200,840 120,830"],
      ["c", "80,525 150,525 137,640 78,630"],
      ["p", "240,50 400,70 800,125 800,145 560,110 550,150 545,200 530,215 525,260 545,330 425,310 430,210 470,150 510,155 505,95 260,65 230,85"],
      ["d", "445,270 480,245 500,265 480,305 450,300"],
      ["p", "800,140 822,145 800,280 785,380 765,380 785,280"], ["p", "815,0 1060,0 1040,165 805,130"], ["d", "1010,75 1048,70 1040,150 1000,140"],
      ["s", "860,0 1015,0 1000,45 960,40 940,25 900,35"], ["s", "895,115 930,130 905,128"],
      ["p", "910,405 960,405 960,465 1045,465 1045,400 1105,375 1105,460 1000,475 1010,605 930,605 915,470"], ["d", "1045,400 1105,375 1105,460 1035,455"],
      ["p", "775,440 840,405 835,440 900,455 910,485 830,485 830,445"], ["d", "1130,520 1185,520 1185,575 1130,575"],
      ["p", "860,660 935,655 935,680 860,690"], ["g", "705,750 785,760 780,800 705,795"], ["p", "930,830 932,1080 690,1030"],
      ["g", "675,1035 930,1080 930,1098 590,1098"], ["b", "660,1070 685,1065 680,1098 658,1098"], ["p", "700,870 772,875 765,905 690,905"],
      ["p", "410,470 460,475 460,520 540,570 560,645 540,640 520,590 440,560 440,520 410,530"],
      ["p", "190,530 225,530 230,590 210,648 200,600"], ["p", "315,580 342,578 325,655 310,650"], ["d", "650,255 692,275 680,298 655,285"],
      ["p", "1000,835 1052,860 1010,912 998,880"], ["p", "1145,985 1185,1000 1170,1035 1140,1035"], ["p", "1060,1045 1120,1050 1125,1098 1090,1075"],
      ["p", "885,815 920,820 905,860"], ["p", "685,515 738,525 735,552 685,540"], ["p", "810,315 885,320 880,335 810,330"],
      ["p", "105,918 175,920 175,950 105,945"], ["p", "215,922 250,930 245,962 205,955"], ["p", "410,20 435,20 428,70 400,70"],
      ["p", "525,0 545,60 552,75 515,85"], ["p", "668,25 705,25 690,110 665,105"], ["d", "1050,295 1072,285 1097,297 1070,315"],
      ["p", "735,580 745,590 740,608"], ["p", "760,610 785,615 775,628"], ["p", "1130,608 1172,612 1165,628"], ["p", "880,618 900,620 898,638"],
      ["p", "130,80 160,88 145,105"], ["p", "845,238 885,238 870,245"], ["p", "950,945 975,940 970,958"], ["p", "1005,965 1030,970 1015,985"], ["p", "1100,355 1132,350 1125,370"],
      ["p", "50,0 90,0 75,60 125,170 125,265 90,260 100,190 50,150"], ["p", "230,70 205,265 195,265"], ["p", "490,375 508,375 500,400"], ["p", "620,1010 660,1020 650,1035"],
      ["w", "512,155 525,145 540,155 530,178"], ["w", "210,1050 240,1045 235,1062"], ["w", "570,1062 595,1050 590,1075 570,1078"],
    ],
    grids: [
      ["240,80 500,110 420,310 205,270", 5, 5], ["565,112 795,145 770,370 550,330", 4, 6], ["840,180 1030,165 1010,330 800,300", 4, 3],
      ["1060,0 1200,20 1200,300 1030,300", 3, 8], ["200,290 540,330 470,430 190,440", 5, 3], ["550,335 770,365 740,450 580,470", 4, 3],
      ["310,490 730,450 730,650 330,650", 7, 5], ["750,470 905,490 930,600 740,600", 4, 3], ["1020,480 1120,480 1115,575 1020,570", 2, 2],
      ["740,610 1200,600 1200,800 710,800", 9, 3], ["570,670 700,680 690,890 555,790", 4, 7], ["335,665 515,658 500,750 325,770", 4, 3],
      ["470,905 690,920 670,1040 480,990", 7, 2], ["940,835 1200,840 1200,1080 935,1060", 5, 6], ["1120,340 1200,320 1200,600 1130,600", 1, 2],
      ["0,10 230,40 200,260 110,130", 4, 4], ["90,270 190,280 170,470 60,430", 5, 4], ["45,685 125,695 120,750 40,745", 3, 1],
      ["260,0 530,20 530,75 250,50", 6, 1], ["580,0 810,20 800,110 580,90", 3, 1],
    ],
    lanes: [
      "0,618 145,642 325,665 355,652 545,650 740,660", "320,760 325,880 300,975 283,1098", "100,945 300,975", "218,868 205,960",
      "930,830 680,1025 575,1098", "680,1030 930,1080 1000,1095", "935,470 932,1098", "705,800 1200,795", "740,608 1200,603",
      "935,830 1200,845", "740,380 800,130 820,0", "690,900 675,1030", "220,45 800,130 1040,165 1200,190", "760,490 1000,475",
      "565,650 560,700 540,790", "450,210 530,220 555,260 530,235", "655,1040 645,1098", "820,800 805,880 830,910",
    ],
  },
  {
    x: 780, y: 1120,
    areas: [
      ["k", "110,140 170,165 200,200 270,190 260,100 275,0 370,0 400,20 440,20 360,80 355,150 430,165 400,240 370,250 360,290 430,330 435,290 490,285 500,250 600,250 610,300 590,330 700,330 710,200 780,90 745,85 670,80 670,0 780,20 900,100 890,200 915,210 900,250 860,350 860,380 815,380 815,535 845,540 845,620 790,710 770,860 760,960 780,1098 120,1098 125,985 195,985 205,950 290,960 330,940 300,900 220,860 255,790 215,760 210,640 260,600 235,560 230,500 250,450 195,450 195,420 245,410 270,400 290,310 200,300"],
      ["g", "115,140 200,200 270,190 330,240 300,310 200,300 170,190"], ["p", "280,320 340,330 375,560 310,640 330,740 370,790 335,900 250,860 260,700 240,560 255,450"],
      ["g", "380,460 490,440 480,560 420,660 400,620 380,540"], ["g", "375,380 420,350 490,440 400,440"],
      ["g", "400,700 480,780 450,840 380,900 420,980 560,1030 640,1070 770,1040 755,950 660,900 500,860 440,900"], ["p", "545,350 700,320 730,370 620,390 520,380"],
      ["g", "670,0 780,20 830,70 760,170 710,200 720,110 770,80 670,80"], ["g", "740,530 845,540 840,620 790,700 720,620"],
      ["g", "200,955 290,985 270,1098 120,1098 125,1060 200,1070"], ["d", "130,990 190,990 180,1050 140,1040"], ["g", "780,290 890,250 860,350 800,310"],
      ["g", "540,100 580,85 660,125 668,152 560,150 545,170"], ["g", "360,160 430,165 410,235 385,240"],
      ["y", "350,195 380,250 430,350 490,440 410,440 400,460 375,455 335,320 260,245"],
      ["y", "370,975 535,1020 510,1098 370,1098"], ["y", "1005,290 1089,272 1089,305 1010,312"],
      ["s", "510,605 560,575 600,580 640,610 668,620 665,690 640,710 640,735 660,752 707,755 690,836 610,836 605,800 540,760 495,700 500,650"],
      ["s", "565,435 590,415 660,405 710,375 695,420 660,452 630,440"], ["s", "640,548 738,535 715,570 680,617 670,600 690,555"],
      ["b", "610,450 640,455 690,480 685,510 640,530 600,570 545,572 540,540 600,545 595,510"],
      ["b", "385,735 410,705 460,710 472,750 450,782 390,765"], ["b", "815,165 855,128 865,190 830,217 805,200"], ["b", "352,652 382,672 360,697"],
      ["b", "495,285 555,268 550,285 500,300"], ["p", "845,650 862,655 850,667"], ["p", "870,745 895,755 885,775 868,765"],
      ["w", "290,540 315,520 340,545 315,590"], ["w", "540,458 578,472 560,478"], ["w", "580,690 605,672 620,695 600,735 585,720"],
      ["w", "638,765 660,765 687,777 650,787"], ["w", "650,570 680,560 675,582 648,587"], ["w", "498,705 515,740 500,755"],
      ["w", "350,870 395,822 400,830 360,880"], ["w", "400,790 418,795 402,815"], ["w", "430,800 448,788 435,812"],
      ["g", "965,0 1089,0 1089,150 1000,162 970,140"], ["g", "920,210 1000,250 1089,270 1089,347 1000,335 960,300"], ["y", "1005,292 1089,272 1089,305 1010,312"],
      ["p", "945,475 1000,440 1005,600 945,595"], ["g", "1010,780 1040,740 1089,700 1089,940 1050,890 990,850"], ["g", "905,895 930,890 940,960 900,950"], ["g", "980,895 1048,930 1040,990 1000,960"],
      ["g", "820,0 920,0 900,100 840,50"],
      ["w", "1025,70 1045,60 1065,75 1062,100 1045,115 1022,95"], ["w", "1035,222 1060,220 1083,240 1050,262 1033,250"], ["w", "1008,385 1030,395 1050,435 1040,452 1005,450"],
      ["w", "320,1060 362,1022 372,1098 300,1098"], ["p", "890,1045 918,1050 920,1098 885,1090"],
      ["d", "0,520 47,520 47,575 0,575"], ["p", "152,665 207,670 205,720 155,755"], ["p", "0,985 45,1000 35,1038 0,1030"], ["p", "35,875 60,885 40,892"], ["p", "125,865 143,868 138,895 125,890"],
    ],
    grids: [
      ["0,0 150,0 85,140 0,140", 3, 3], ["0,150 70,180 70,300 0,310", 2, 2], ["0,320 75,320 75,740 0,740", 1, 3], ["190,315 280,320 250,400 190,400", 3, 2],
      ["105,300 210,460 210,600 110,750", 1, 3], ["150,20 250,10 240,130 120,100", 2, 3], ["370,80 660,-20 700,150 440,160", 5, 3], ["430,170 700,200 690,240 420,250", 5, 2],
      ["580,200 690,220 690,320 620,290", 2, 2], ["820,390 880,440 890,560 820,530", 2, 3], ["800,690 900,700 930,940 770,960", 3, 8], ["1005,360 1089,380 1089,600 1005,600", 2, 6],
      ["905,600 1000,600 990,800 930,860", 3, 4], ["0,770 80,780 80,1090 0,1080", 1, 5], ["110,760 240,780 220,860 120,840", 2, 1], ["130,900 200,920 190,980 130,980", 2, 1],
    ],
    lanes: [
      "355,150 375,230 430,350 490,430 488,480 468,520 465,585 425,660 405,740 395,770 400,830 350,905 370,965", "355,150 440,165 705,205 815,235 885,200 1075,200",
      "355,150 360,80 440,20", "695,320 730,365 715,430 718,490 740,525 845,535", "740,525 725,570 710,620 785,715", "785,715 770,860 757,960 785,1040",
      "640,550 590,572 530,575 530,515 555,500 597,490 632,458 668,475 685,470", "845,535 845,620 785,715", "705,160 700,205 695,320", "555,285 495,300 488,335 502,358",
      "0,457 205,457", "0,603 285,600", "0,795 245,795", "105,307 275,310", "60,200 145,205 190,265 190,350", "330,265 375,245", "180,160 200,190 265,190", "280,155 360,115",
      "535,1025 510,1098", "950,205 1075,200 1080,60", "890,350 955,380 1005,410", "870,603 1005,600 1089,650", "720,1070 735,1098", "560,148 705,165", "700,135 790,80 795,0",
      "400,830 440,810 450,780", "820,940 930,935", "1030,890 1055,940 1060,1000",
    ],
  },
];

const parse = (s: string) => s.split(" ").map((pair) => pair.split(",").map(Number));

/* Street segments interpolated across a quadrilateral, leaving out a few so blocks vary. */
function gridPath([quad, cols, rows]: Grid, seed: number) {
  const [a, b, c, d] = parse(quad);
  let state = seed * 7919 + 17;
  const rnd = () => {
    state = (state * 1103515245 + 12345) % 2147483648;
    return state / 2147483648;
  };
  const shiftU = Array.from({ length: cols + 1 }, (_, i) => (i === 0 || i === cols ? 0 : (rnd() - 0.5) * 0.4));
  const shiftV = Array.from({ length: rows + 1 }, (_, i) => (i === 0 || i === rows ? 0 : (rnd() - 0.5) * 0.4));
  const at = (i: number, j: number) => {
    const u = (i + shiftU[i]) / cols;
    const v = (j + shiftV[j]) / rows;
    const mix = (k: number) =>
      (1 - v) * ((1 - u) * a[k] + u * b[k]) + v * ((1 - u) * d[k] + u * c[k]);
    return `${mix(0).toFixed(1)} ${mix(1).toFixed(1)}`;
  };
  let out = "";
  for (let j = 0; j <= rows; j++)
    for (let i = 0; i < cols; i++) if (rnd() > 0.2) out += `M${at(i, j)}L${at(i + 1, j)}`;
  for (let i = 0; i <= cols; i++)
    for (let j = 0; j < rows; j++) if (rnd() > 0.34) out += `M${at(i, j)}L${at(i, j + 1)}`;
  return out;
}

type RoadClass = "street" | "arterial" | "highway" | "freeway";
const ROAD: Record<RoadClass, { edge: string; core: string }> = {
  street: { edge: "#d3d4d9", core: "#d3d4d9" },
  arterial: { edge: "#a9b3bc", core: "#ccd4d8" },
  highway: { edge: "#a2a7b8", core: "#cbcdd9" },
  freeway: { edge: "#888b97", core: "#b0b3bd" },
};

const ROADS: [RoadClass, number, number, string][] = [
  [ "street", 4.5, 0, "413,357 413,375 421,410 420,480 407,563 401,593 387,612 363,627 340,637 277,645 260,660 250,677 245,710 243,740 235,793 223,883 210,981" ],
  [ "street", 4, 0, "36,956 210,981 430,1013 493,1022 597,1037 733,1055" ],
  [ "street", 4.5, 0, "655,357 650,387 640,460 627,550 617,622 600,750 582,837" ],
  [ "street", 4.5, 0, "525,813 512,920 493,1022 477,1140 467,1210 453,1290 437,1403 425,1486" ],
  [ "street", 3.5, 0, "487,437 581,370 597,370 650,385" ],
  [ "street", 3.5, 0, "640,460 667,466 733,476 800,486 822,490" ],
  [ "street", 3.5, 0, "733,476 722,560 710,635" ],
  [ "street", 3.5, 0, "733,549 780,555 813,561 895,574 935,578 1003,590" ],
  [ "street", 3.5, 0, "828,466 812,560 802,635" ],
  [ "street", 3.5, 0, "828,466 893,474 1018,491 1093,492 1110,480 1135,464 1143,466" ],
  [ "street", 4, 0, "1018,491 1003,590 988,690 975,760 964,822" ],
  [ "street", 4, 0, "907,765 973,774" ],
  [ "street", 3, 0, "897,765 880,876" ],
  [ "street", 4, 0, "661,900 693,933 780,946 867,959 957,972 992,990 1030,1019 1083,1053 1093,1090" ],
  [ "street", 3.5, 0, "793,863 880,875" ],
  [ "street", 3.5, 0, "793,863 785,940 765,1070 750,1170 740,1230" ],
  [ "street", 4, 0, "818,1401 872,1412 883,1430 897,1443 960,1460 987,1478 1003,1480 1037,1470 1077,1457" ],
  [ "street", 3, 0, "1078,1267 1125,1255 1143,1252" ],
  [ "street", 3.5, 0, "845,1064 862,1069" ],
  [ "arterial", 7, 5, "36,547 137,598 197,633" ],
  [ "arterial", 7, 5.5, "425,348 487,437 567,550 617,622 733,640 903,665 990,680 1127,698 1136,702 1146,715" ],
  [ "arterial", 9, 7, "615,857 640,868 700,877 780,887 820,896 947,915 1013,923 1067,928 1143,914" ],
  [ "arterial", 6.5, 4.5, "1013,923 1015,915 1053,921 1067,928" ],
  [ "arterial", 6.5, 4.5, "1012,925 1013,934 1050,938 1067,928 1070,903 1087,882 1110,874 1146,863" ],
  [ "arterial", 6.5, 4.5, "1113,922 1113,932 1084,958 1097,990 1117,1027 1117,1043 1100,1080 1090,1117 1087,1210 1075,1257 1075,1273 1097,1453 1101,1486" ],
  [ "arterial", 7, 5, "34,1400 63,1373 103,1338 127,1324 213,1300 290,1277 313,1273 367,1291 400,1292 453,1290 467,1287 550,1272 650,1252 733,1235 810,1222" ],
  [ "highway", 10.5, 8.5, "841,350 843,383 852,413 887,463 894,483 896,583 903,670 909,723 904,763 957,850 960,863 948,973 940,1000 903,1028 847,1093 812,1167 808,1183 810,1370 812,1437 803,1488" ],
  [ "street", 3, 0, "805,375 835,405 860,390 875,392" ],
  [ "street", 3, 0, "850,357 862,380 880,388" ],
  [ "freeway", 16, 14, "730,346 763,356 800,368 843,381 883,386 940,384 967,385 990,389 1018,398 1045,411 1070,427 1088,446 1104,470 1121,494 1150,536" ],
];

const CREEKS = [
  "36,511 63,487 73,486",
  "856,357 865,373 877,378 943,377 965,362 993,378 1020,387 1053,403 1080,413 1108,417 1128,436 1143,432",
  "803,361 825,352",
  "428,873 438,907 421,972 437,1037 436,1090 427,1140 423,1163 436,1187 413,1247 360,1280 353,1293 335,1335 318,1357 323,1420 313,1443",
  "36,1440 53,1422 112,1394 126,1383 270,1446 313,1444 340,1455 365,1479 400,1479 410,1487",
  "1143,834 1093,834 1073,847",
  "1055,851 1030,860 1022,869",
  "1008,968 1037,971 1060,981 1080,995 1108,1024 1108,1047 1113,1073 1098,1107 1100,1120 1099,1173 1115,1237 1114,1320 1128,1350 1126,1377 1112,1407 1122,1443",
  "939,1055 915,1078 880,1082 872,1097 888,1123 869,1153 895,1183 865,1202 890,1227 893,1260 904,1305 882,1333 895,1368 905,1380 892,1413 896,1443 882,1473 881,1486",
];

const PLACES: [string, number, number, number, number][] = [
  ["Wendouree", 521, 549, 217, 37.5],
  ["Ballarat", 933, 584, 136, 35.5],
  ["North", 951, 622, 100, 35.5],
  ["Alfredton", 327, 831, 166, 35.5],
  ["Newington", 630, 897, 191, 35.5],
  ["Redan", 733, 1073, 111, 35.5],
  ["Golden", 985, 1079, 126, 35.5],
  ["Point", 1001, 1116, 92, 35.5],
  ["Winter", 322, 1165, 117, 35.5],
  ["Valley", 329, 1202, 104, 35.5],
  ["Sebastopol", 603, 1369, 217, 37.5],
  ["mythes", 34, 1475, 127, 35.5],
  ["Mou", 1078, 1467, 76, 35.5],
  ["Cle", 1088, 1505, 56, 35.5],
];

const LABEL = {
  fontFamily: "Inter, sans-serif",
  fill: "#3b3b3b",
  stroke: "#fbfaf5",
  strokeLinejoin: "round" as const,
  paintOrder: "stroke",
};

const Pin = ({ x, y, tone }: { x: number; y: number; tone: "red" | "blue" }) => (
  <g transform={`translate(${x} ${y})`}>
    <path
      d="M0 57C-3 46-11 41-20 37A42 42 0 1 1 20 37C11 41 3 46 0 57Z"
      fill={`url(#pin-${tone})`}
      filter="url(#pin-shadow)"
    />
    <path d="M-3-7H3L2.4 20Q0 32-2.4 20Z" fill="#fff" />
    <circle cy="-15" r="10.2" fill="#fff" />
    <circle cx="-3" cy="-18" r="3.4" fill={tone === "red" ? "#fb6a6c" : "#3a3af5"} />
  </g>
);

const CityMap = () => (
  <svg width="1107" height="1129" viewBox="36 357 1107 1129">
    <defs>
      {[
        ["red", "#ff7f80", "#f9595d", "#b52c36"],
        ["blue", "#4545ff", "#1a1af2", "#0000b0"],
      ].map(([id, hi, mid, lo]) => (
        <radialGradient key={id} id={`pin-${id}`} cx="50%" cy="24%" r="76%">
          <stop offset="0" stopColor={hi} />
          <stop offset=".5" stopColor={mid} />
          <stop offset="1" stopColor={lo} />
        </radialGradient>
      ))}
      <filter id="pin-shadow" x="-40%" y="-30%" width="180%" height="170%">
        <feDropShadow dx="0" dy="4" stdDeviation="5" floodColor="#000" floodOpacity=".35" />
      </filter>
    </defs>
    <rect x="36" y="357" width="1107" height="1129" fill={FILL.b} />
    {SHEETS.map((s) => (
      <g key={`a${s.x}-${s.y}`} transform={`translate(${s.x} ${s.y}) scale(.33333)`}>
        {s.areas.map(([kind, pts], i) => (
          <polygon key={i} points={pts} fill={FILL[kind]} />
        ))}
      </g>
    ))}
    <polygon
      fill={FILL.w}
      points="670,683 683,682 730,684 740,692 748,697 755,690 770,686 800,695 825,705 836,708 841,724 845,735 852,750 853,767 848,790 828,813 823,833 797,837 763,846 733,848 715,842 700,838 677,853 647,843 624,836 620,826 622,817 632,790 627,773 627,743 633,713 647,697"
    />
    <polygon
      fill={FILL.g}
      points="690,702 704,706 750,711 788,720 791,730 787,740 763,753 744,764 713,779 711,771 728,766 708,763 680,758 658,743 660,730 667,718"
    />
    <path d="M712 706V776M724 742L718 756 728 770M728 746L742 752 741 764" stroke={FILL.w} strokeWidth="4.5" fill="none" />
    {SHEETS.map((s, n) => (
      <g
        key={`s${s.x}-${s.y}`}
        transform={`translate(${s.x} ${s.y}) scale(.33333)`}
        fill="none"
        stroke="#dcdde2"
        strokeLinejoin="round"
      >
        <path strokeWidth="3.6" d={s.grids.map((g, i) => gridPath(g, n * 31 + i)).join("")} />
        {s.lanes.map((pts, i) => (
          <polyline key={i} points={pts} strokeWidth="4.5" stroke="#d8dadd" />
        ))}
      </g>
    ))}
    <g fill="none" stroke="#8adbfa" strokeWidth="3.2" strokeLinejoin="round">
      {CREEKS.map((pts) => (
        <polyline key={pts} points={pts} />
      ))}
    </g>
    <g fill="none" strokeLinejoin="round">
      {ROADS.map(([cls, edge, core, pts]) => (
        <React.Fragment key={pts}>
          <polyline points={pts} stroke={ROAD[cls].edge} strokeWidth={edge} />
          {core > 0 && <polyline points={pts} stroke={ROAD[cls].core} strokeWidth={core} />}
        </React.Fragment>
      ))}
    </g>
    <rect x="576" y="320" width="70" height="39.5" rx="16" fill="#fff" stroke="#1d7a4e" strokeWidth="3" />
    {PLACES.map(([name, x, y, len, size]) => (
      <text key={name} x={x} y={y} fontSize={size} fontWeight="600" strokeWidth="6" textLength={len} {...LABEL}>
        {name}
      </text>
    ))}
    <text
      fontSize="24" fontWeight="500" strokeWidth="6" textLength="161"
      transform="translate(734 647) rotate(8.3)" {...LABEL}
    >
      HOWITT ST
    </text>
    <text
      fontSize="25" fontWeight="500" strokeWidth="6" textLength="185"
      transform="translate(465 1294.500) rotate(-10.5)" {...LABEL}
    >
      SMYTHES RD
    </text>
    <g fontFamily="Inter, sans-serif" opacity=".62">
      <FaApple x="61.5" y="1413.5" size={41} color="#000" />
      <text x="101" y="1453" fontSize="46" fontWeight="500" textLength="115">Maps</text>
      <text x="246" y="1450" fontSize="26" fontWeight="500" textLength="73">Legal</text>
      <path d="M246 1454.700H278M296 1454.700H320" stroke="#000" strokeWidth="3" />
    </g>
    <g fill="none" stroke="#000" strokeWidth="8.6" strokeLinejoin="round" strokeLinecap="round">
      <polyline points="199,627 199,634 217,645 413,747 615,856.500 618,837 675,859 702,842 723,850 736,851.500 763,849 795,840.500 810,842 823,838 953,858 961,855 964,823 970,836 985,837" />
      <polyline points="1006,867 1012,862" />
    </g>
    <Pin x={199} y={569} tone="red" />
    <Pin x={1007} y={810} tone="blue" />
    <rect x="1089" y="393" width="14" height="4" />
  </svg>
);

const StatusIcons = () => (
  <>
    <svg width="58" height="40" viewBox="0 0 58 40" fill="#8fb7ca">
      {[0, 16, 32, 48].map((x) => (
        <rect key={x} x={x} y="28" width="10" height="10" rx="3" />
      ))}
    </svg>
    <svg width="51" height="38" viewBox="0 0 51 38">
      <path d="M25.500 0C36 0 44.500 4 50.400 10Q51.300 11 50.400 12L47 15.300Q46.200 16 45.300 15.200C40 10.300 33 7.600 25.500 7.600S11 10.300 5.700 15.200Q4.800 16 4 15.300L.6 12Q-.3 11 .6 10C6.500 4 15 0 25.500 0Z" />
      <path d="M25.500 12.700C32 12.700 37.700 15.200 41.700 19.100Q42.600 20 41.700 21L38.300 24.300Q37.400 25.100 36.500 24.300C33.500 21.600 29.700 20.200 25.500 20.200S17.500 21.600 14.500 24.300Q13.600 25.100 12.700 24.300L9.300 21Q8.400 20 9.300 19.100C13.300 15.200 19 12.700 25.500 12.700Z" />
      <path d="M25.500 25.300C28.300 25.300 30.900 26.400 32.800 28.100Q33.800 29 32.900 30L26.400 36.500Q25.500 37.300 24.600 36.500L18.100 30Q17.200 29 18.200 28.100C20.100 26.400 22.700 25.300 25.500 25.300Z" />
    </svg>
    <svg width="82" height="39" viewBox="0 0 82 39">
      <rect x="1.500" y="1.500" width="72" height="36" rx="11" fill="none" stroke="#6f8f9d" strokeWidth="3" />
      <rect x="6" y="6" width="63" height="27" rx="7.500" />
      <path d="M77.500 13.500Q82 15.500 82 19.500T77.500 25.500Z" fill="#6f8f9d" />
    </svg>
  </>
);

const HomeIcon = () => (
  <TabGlyph viewBox="0 0 90 90" strokeWidth="5.6" strokeLinecap="round" strokeLinejoin="round">
    <path d="M82 46V62C82 76 76 82.200 62 82.200H27C13 82.200 7.200 76 7.200 62V36C7.200 29 9 25.500 14 22L38.500 8.800Q44.800 5.200 51 8.800L76.500 23Q80 25.500 81 28.500" />
    <path d="M33.500 67.500H55.700" />
  </TabGlyph>
);
const SearchIcon = () => (
  <TabGlyph viewBox="0 0 90 90" strokeWidth="6.8" strokeLinecap="round">
    <circle cx="41.500" cy="41.500" r="30" />
    <path d="M63.500 63.500L78.500 78.500M42.500 22.300C53 22.300 60.300 31 60.300 41.500" />
  </TabGlyph>
);
const CalendarIcon = () => (
  <TabGlyph viewBox="0 0 90 90" strokeWidth="6">
    <rect x="3" y="15" width="84" height="72" rx="6" />
    <path d="M21 0V30M69 0V30M18 45H36M54 45H72M18 63H36M54 63H72" />
  </TabGlyph>
);
const ProfileIcon = () => (
  <TabGlyph viewBox="0 0 90 90" strokeWidth="9" strokeLinecap="round">
    <circle cx="45" cy="27" r="23" />
    <path d="M17.500 85.500H10.500C6 85.500 4.500 83 4.800 79C6.500 62 22 49.500 45 49.500S83.500 62 85.200 79C85.500 83 84 85.500 79.500 85.500H72.500" />
    <path d="M38 77L45 84 56.500 72.500" />
  </TabGlyph>
);

export default function App() {
  return (
    <>
      <GlobalStyle />
      <Screen>
        <StatusBar>
          <StatusSide $start={156}>
            <Clock>12:11</Clock>
          </StatusSide>
          <Island />
          <StatusSide $start={68} $gap={22}>
            <StatusIcons />
          </StatusSide>
        </StatusBar>
        <Title>Select Address</Title>
        <MapFrame>
          <CityMap />
        </MapFrame>
        <Actions>
          <PillButton $bg="#004d40" $fg="#fff">Added to Favroites</PillButton>
          <PillButton $bg="#98ff98" $fg="#2c3e50">I rock along</PillButton>
          <PillButton $bg="#007fff" $fg="#000" $tracking={0}>I'm a Rider</PillButton>
        </Actions>
        <TabBar>
          <HomeIcon />
          <SearchIcon />
          <CalendarIcon />
          <ProfileIcon />
        </TabBar>
        <HomeArea>
          <HomeIndicator />
        </HomeArea>
      </Screen>
    </>
  );
}
